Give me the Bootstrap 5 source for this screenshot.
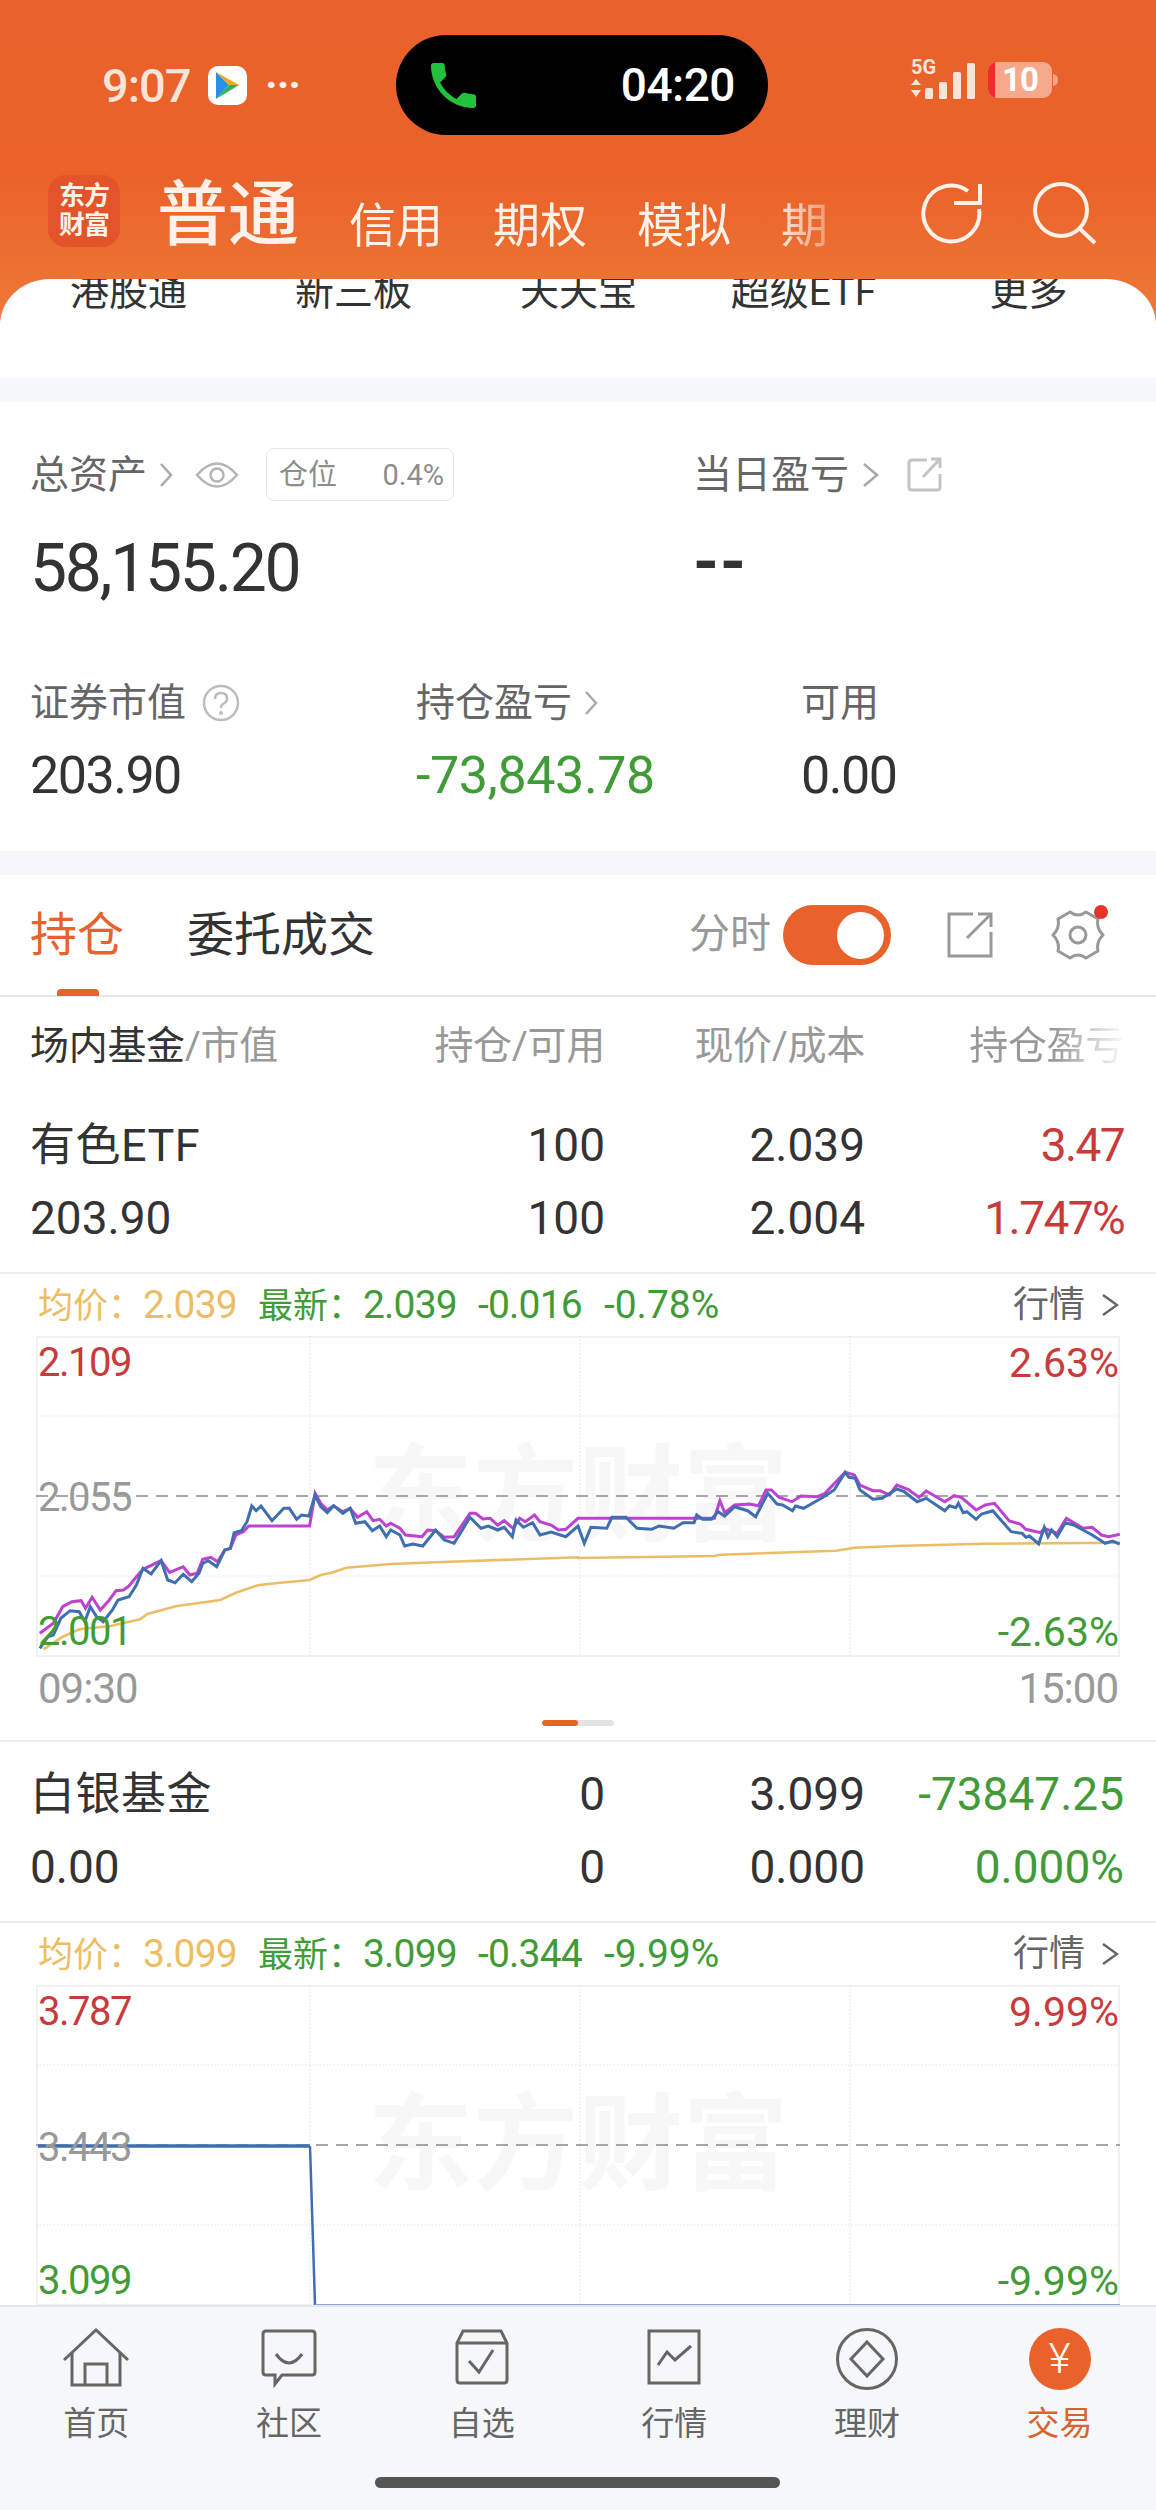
<!DOCTYPE html>
<html lang="zh-CN">
<head>
<meta charset="UTF-8">
<meta name="viewport" content="width=device-width, initial-scale=1.0">
<title>交易</title>
<link href="https://cdn.jsdelivr.net/npm/bootstrap@5.3.3/dist/css/bootstrap.min.css" rel="stylesheet" crossorigin="anonymous">
<style>
body { font-family: Roboto, "Noto Sans CJK SC", sans-serif; background: #f6f7f9; color: #333; }
.phone { width: 1156px; height: 2510px; overflow: hidden; }
.app-head { height: 325px; background: linear-gradient(180deg, #ea622b 0%, #ea622a 55%, #ee7a38 100%); color: #fdf1e9; }
.status-row { padding-top: 35px; height: 135px; }
.status-left { width: 396px; height: 100px; padding-left: 102px; }
.clock { font-size: 47px; font-weight: 500; letter-spacing: -1px; line-height: 1; color: #f9e4d8; width: 106px; }
.app-ico { width: 39px; height: 39px; background: #fff; border-radius: 10px; }
.more-dots { margin-left: 18px; font-size: 42px; font-weight: 700; letter-spacing: -1px; line-height: 1; }
.call-pill { width: 372px; height: 100px; background: #000; border-radius: 50px; padding: 0 33px 0 35px; color: #fff; font-size: 46px; font-weight: 500; letter-spacing: -.5px; }
.status-right { padding-left: 143px; height: 100px; padding-top: 23px; }
.batt-ico { margin-left: 13px; }
.tab-row { padding: 40px 0 0 48px; height: 112px; }
.logo-box { width: 72px; height: 72px; border-radius: 18px; background: #e4542a; font-size: 26px; font-weight: 700; line-height: 29px; text-align: center; padding-top: 7px; letter-spacing: -1px; }
.type-tabs { width: 668px; margin-left: 37px; height: 77px; overflow: hidden; white-space: nowrap; gap: 50px; -webkit-mask-image: linear-gradient(90deg, #000 92%, rgba(0,0,0,.4) 100%); mask-image: linear-gradient(90deg, #000 92%, rgba(0,0,0,.4) 100%); }
.tab-big { font-size: 71px; line-height: 74px; font-weight: 500; }
.tab-small { font-size: 47px; line-height: 52px; }
.head-icons { margin-left: 95px; gap: 49px; padding-top: 7px; }
.quick-strip { height: 99px; margin-top: -46px; background: #fff; border-radius: 50px 50px 0 0 / 46px 46px 0 0; overflow: hidden; }
.quick-inner { display: grid; grid-template-columns: repeat(5, 225px); padding-left: 16px; margin-top: -6px; font-size: 39px; line-height: 38px; color: #333; text-align: center; }
.acct-card { margin-top: 24px; height: 449px; background: #fff; padding: 46px 0 0 30px; }
.lbl { color: #666; font-size: 39px; line-height: 50px; }
.chev { margin-left: 12px; }
.acct-col-a { width: 663px; }
.acct-col-b { width: 386px; }
.acct-col-c { width: 385px; }
.eye-ico { margin-left: 22px; }
.pos-tag { margin-left: 27px; height: 53px; width: 188px; border: 1px solid #e6e6e6; border-radius: 8px; color: #8d8d8d; font-size: 29px; padding: 0 9px 0 12px; }
.ext-ico { margin-left: 28px; }
.total-val { font-size: 66px; line-height: 70px; margin-top: 33px; letter-spacing: -2.3px; }
.dash-val { font-size: 66px; line-height: 70px; margin-top: 27px; font-weight: 700; letter-spacing: 1px; }
.sub-row { margin-top: 74px; }
.val-md { font-size: 52px; line-height: 50px; margin-top: 23px; letter-spacing: -1.5px; }
.val-wide { letter-spacing: -.4px; }
.up-red { color: #c93a3a; }
.down-grn { color: #419c37; }
.hold-wrap { margin-top: 24px; background: #fff; }
.hold-tabs { height: 122px; padding: 0 51px 0 30px; border-bottom: 2px solid #e9e9e9; position: relative; font-size: 47px; }
.tab-on { color: #e8622d; }
.tab-on-bar { position: absolute; left: 57px; bottom: -1px; width: 42px; height: 7px; background: #e8622d; border-radius: 4px 4px 0 0; }
.tab-off { margin-left: 63px; color: #333; }
.fs-label { color: #999; font-size: 41px; margin-right: 12px; }
.switch-pill { width: 108px; height: 60px; background: #ea622b; border-radius: 30px; padding: 0 7px; margin-right: 56px; }
.switch-knob { width: 47px; height: 47px; border-radius: 50%; background: #fff; }
.gear-wrap { position: relative; margin-left: 58px; }
.gear-dot { position: absolute; right: -3px; top: -3px; width: 14px; height: 14px; border-radius: 50%; background: #e8332a; }
.hold-grid { display: grid; grid-template-columns: 330px 245px 260px 259px; padding-left: 30px; }
.hold-head { height: 97px; font-size: 39px; color: #999; letter-spacing: -.3px; }
.hold-head > div { align-self: center; line-height: 50px; }
.name-dark { color: #333; }
.fade-cell { display: inline-block; -webkit-mask-image: linear-gradient(90deg, #000 55%, rgba(0,0,0,.05) 100%); mask-image: linear-gradient(90deg, #000 55%, rgba(0,0,0,.05) 100%); }
.stock-rows { padding: 15px 0 17px; border-bottom: 2px solid #ededed; }
.stock-line { height: 73px; font-size: 46px; line-height: 73px; }
.name-cn { font-size: 45px; letter-spacing: .5px; }
.red-tight { letter-spacing: -1.6px; }
.chart-info { height: 62px; padding: 0 37px 0 38px; font-size: 39px; letter-spacing: -.8px; }
.info-cn { font-size: 35px; letter-spacing: 0; }
.gap-info { margin-left: 21px; }
.pct-wide { margin-left: 22px; letter-spacing: 0; }
.amber { color: #eebd63; }
.quote-link { color: #666; font-size: 36px; letter-spacing: 0; }
.chart-box { position: relative; margin-left: 36px; width: 1084px; height: 321px; border: 2px solid #f1f1f1; }
.chart-box svg { position: absolute; left: -2px; top: -2px; }
.water-mark { position: absolute; inset: 0; font-size: 105px; font-weight: 700; color: #f7f7f7; letter-spacing: 0; }
.chart-lbl { position: absolute; font-size: 40px; line-height: 40px; letter-spacing: -1.5px; }
.lbl-l { left: 0; }
.lbl-r { right: -1px; font-size: 41px; letter-spacing: 0; }
.lbl-gray { color: #999; }
.pos-a { top: 5px; }
.pos-m1 { top: 140px; }
.pos-m2 { top: 141px; }
.pos-b { top: 274px; }
.time-row { height: 60px; padding: 2px 38px 0; color: #999; font-size: 42px; letter-spacing: -1px; }
.pager-bar { width: 72px; height: 6px; margin: 3px auto 14px; background: #e3e3e3; border-radius: 3px; overflow: hidden; }
.pager-on { width: 36px; height: 6px; background: #ea622b; border-radius: 3px; }
.stock-two { border-top: 2px solid #ededed; padding-top: 16px; }
.main-scroll { height: 2305px; overflow: hidden; }
.bottom-nav { height: 205px; background: #f6f7f9; border-top: 2px solid #e6e7ec; padding-top: 21px; position: relative; }
.nav-ico { height: 62px; }
.nav-txt { font-size: 33px; line-height: 40px; margin-top: 14px; color: #666; }
.nav-txt-on { color: #d9622e; }
.yuan-dot { width: 62px; height: 62px; border-radius: 50%; background: #ea622b; color: #fff; font-size: 42px; font-weight: 300; line-height: 1; }
.home-bar { position: absolute; left: 375px; top: 170px; width: 405px; height: 11px; background: #555; border-radius: 6px; }
</style>
</head>
<body>
<div class="phone">
  <div class="main-scroll">
    <div class="app-head">
      <div class="status-row d-flex">
        <div class="status-left d-flex align-items-center">
          <span class="clock">9:07</span>
          <span class="app-ico d-flex align-items-center justify-content-center">
            <svg width="27" height="31" viewBox="0 0 27 31"><polygon points="2,2 15,15 2,29" fill="#2a8fe8"/><polygon points="2,2 25,15 15,15" fill="#f6a623"/><polygon points="2,29 25,15 15,15" fill="#2fb45a"/></svg>
          </span>
          <span class="more-dots">···</span>
        </div>
        <div class="call-pill d-flex align-items-center justify-content-between">
          <svg width="45" height="45" viewBox="3 3 18 18"><path fill="#22c23c" d="M6.62 10.79c1.44 2.83 3.76 5.14 6.59 6.59l2.2-2.2c.27-.27.67-.36 1.02-.24 1.12.37 2.33.57 3.57.57.55 0 1 .45 1 1V20c0 .55-.45 1-1 1-9.39 0-17-7.61-17-17 0-.55.45-1 1-1h3.5c.55 0 1 .45 1 1 0 1.25.2 2.45.57 3.57.11.35.03.74-.25 1.02l-2.2 2.2z"/></svg>
          <span>04:20</span>
        </div>
        <div class="status-right d-flex align-items-start">
          <svg width="64" height="41" viewBox="0 0 64 41">
            <text x="0" y="16" font-family="Roboto" font-size="20" font-weight="700" fill="#f9e4d8">5G</text>
            <polygon points="0,27 5,21 10,27" fill="#f9e4d8"/><polygon points="0,32 5,39 10,32" fill="#f9e4d8"/>
            <rect x="14" y="30" width="8" height="11" rx="1.5" fill="#f9e4d8"/><rect x="28" y="24" width="8" height="17" rx="1.5" fill="#f9e4d8"/><rect x="42" y="14" width="8" height="27" rx="1.5" fill="#f9e4d8"/><rect x="56" y="5" width="8" height="36" rx="1.5" fill="#f9e4d8"/>
          </svg>
          <svg class="batt-ico" width="70" height="41" viewBox="0 0 70 41">
            <rect x="0" y="4" width="64" height="36" rx="9" fill="#f5a98a"/>
            <path d="M9 4 A9 9 0 0 0 0 13 V31 A9 9 0 0 0 9 40 H7 V4Z" fill="#ee2c2c"/>
            <path d="M65 16 q5 1 5 6 q0 5 -5 6Z" fill="#f5a98a"/>
            <text x="14" y="33" font-family="Roboto" font-size="33" font-weight="700" letter-spacing="-1" fill="#fff">10</text>
          </svg>
        </div>
      </div>
      <div class="tab-row d-flex">
        <div class="logo-box flex-shrink-0">东方<br>财富</div>
        <div class="type-tabs d-flex align-items-end">
          <span class="tab-big">普通</span>
          <span class="tab-small">信用</span>
          <span class="tab-small">期权</span>
          <span class="tab-small">模拟</span>
          <span class="tab-small">期</span>
        </div>
        <div class="head-icons d-flex align-items-start flex-shrink-0">
          <svg width="64" height="64" viewBox="0 0 64 64" fill="none" stroke="#fdf1e9" stroke-width="4"><path d="M48 9 A28 28 0 1 0 59 27"/><path d="M60 2 V21 H34"/></svg>
          <svg width="64" height="64" viewBox="0 0 64 64" fill="none" stroke="#fdf1e9" stroke-width="4"><circle cx="28" cy="28" r="26"/><path d="M46 46 L62 61"/></svg>
        </div>
      </div>
    </div>

    <div class="quick-strip">
      <div class="quick-inner">
        <div>港股通</div>
        <div>新三板</div>
        <div>天天宝</div>
        <div>超级ETF</div>
        <div>更多</div>
      </div>
    </div>

    <div class="acct-card">
      <div class="d-flex">
        <div class="acct-col-a d-flex align-items-center lbl">
          总资产
          <svg class="chev" width="14" height="28" viewBox="0 0 14 28" fill="none" stroke="#aaa" stroke-width="2.5"><path d="M2 3 L12 14 L2 25"/></svg>
          <svg class="eye-ico" width="44" height="30" viewBox="0 0 44 30" fill="none" stroke="#b5b5b5" stroke-width="2.5"><path d="M2 15 Q22 -8 42 15 Q22 38 2 15Z"/><circle cx="22" cy="15" r="6.5"/></svg>
          <span class="pos-tag d-flex align-items-center justify-content-between"><span>仓位</span><span>0.4%</span></span>
        </div>
        <div class="d-flex align-items-center lbl">
          当日盈亏
          <svg class="chev" width="18" height="28" viewBox="0 0 18 28" fill="none" stroke="#aaa" stroke-width="2.5"><path d="M3 3 L16 14 L3 25"/></svg>
          <svg class="ext-ico" width="36" height="36" viewBox="0 0 36 36" fill="none" stroke="#c4c4c4" stroke-width="3"><path d="M20 3 H5 Q2 3 2 6 V30 Q2 33 5 33 H30 Q33 33 33 30 V17"/><path d="M16 20 L32 3"/><path d="M24 2 H33 V11"/></svg>
        </div>
      </div>
      <div class="d-flex">
        <div class="acct-col-a total-val">58,155.20</div>
        <div class="dash-val">--</div>
      </div>
      <div class="d-flex sub-row">
        <div class="acct-col-b d-flex align-items-center lbl">
          证券市值
          <svg class="ms-3" width="38" height="38" viewBox="0 0 38 38" fill="none" stroke="#bdbdbd" stroke-width="2.5"><circle cx="19" cy="19" r="17"/><path d="M13 15 Q13 9 19 9 Q25 9 25 14.5 Q25 18 21 20 Q19 21 19 24"/><circle cx="19" cy="29" r=".8"/></svg>
        </div>
        <div class="acct-col-c d-flex align-items-center lbl">
          持仓盈亏
          <svg class="chev" width="14" height="28" viewBox="0 0 14 28" fill="none" stroke="#aaa" stroke-width="2.5"><path d="M2 3 L12 14 L2 25"/></svg>
        </div>
        <div class="lbl">可用</div>
      </div>
      <div class="d-flex">
        <div class="acct-col-b val-md">203.90</div>
        <div class="acct-col-c val-md val-wide down-grn">-73,843.78</div>
        <div class="val-md">0.00</div>
      </div>
    </div>

    <div class="hold-wrap">
      <div class="hold-tabs d-flex align-items-center">
        <span class="tab-on">持仓</span>
        <span class="tab-on-bar"></span>
        <span class="tab-off">委托成交</span>
        <span class="ms-auto fs-label">分时</span>
        <span class="switch-pill d-flex align-items-center justify-content-end"><span class="switch-knob"></span></span>
        <svg width="46" height="46" viewBox="0 0 46 46" fill="none" stroke="#999" stroke-width="3"><path d="M26 2 H2 V44 H44 V20"/><path d="M20 26 L43 3"/><path d="M31 2 H44 V15"/></svg>
        <span class="gear-wrap d-inline-flex">
          <svg width="54" height="54" viewBox="0 0 54 54" fill="none" stroke="#999" stroke-width="3" stroke-linejoin="round"><path d="M19 4 Q27 10 35 4 L47 11 Q45 20 52 27 Q45 34 47 43 L35 50 Q27 44 19 50 L7 43 Q9 34 2 27 Q9 20 7 11 Z"/><circle cx="27" cy="27" r="8"/></svg>
          <span class="gear-dot"></span>
        </span>
      </div>
      <div class="hold-grid hold-head">
        <div><span class="name-dark">场内基金</span>/市值</div>
        <div class="text-end">持仓/可用</div>
        <div class="text-end">现价/成本</div>
        <div class="text-end"><span class="fade-cell">持仓盈亏</span></div>
      </div>
      <div class="stock-rows">
        <div class="hold-grid stock-line">
          <div class="name-cn">有色ETF</div><div class="text-end">100</div><div class="text-end">2.039</div><div class="text-end up-red red-tight">3.47</div>
        </div>
        <div class="hold-grid stock-line">
          <div>203.90</div><div class="text-end">100</div><div class="text-end">2.004</div><div class="text-end up-red red-tight">1.747%</div>
        </div>
      </div>

      <div class="chart-info d-flex align-items-center">
        <span class="amber"><span class="info-cn">均价：</span>2.039</span>
        <span class="down-grn gap-info"><span class="info-cn">最新：</span>2.039</span>
        <span class="down-grn gap-info">-0.016</span>
        <span class="down-grn pct-wide">-0.78%</span>
        <span class="ms-auto quote-link d-flex align-items-center">行情
          <svg class="ms-3" width="18" height="26" viewBox="0 0 18 26" fill="none" stroke="#666" stroke-width="2.5"><path d="M2 3 L16 13 L2 23"/></svg>
        </span>
      </div>
      <div class="chart-box">
        <div class="water-mark d-flex align-items-center justify-content-center">东方财富</div>
        <svg id="chart-etf" width="1084" height="321" viewBox="36 1336 1084 321" fill="none"></svg>
        <span class="chart-lbl lbl-l up-red pos-a">2.109</span>
        <span class="chart-lbl lbl-r up-red pos-a">2.63%</span>
        <span class="chart-lbl lbl-l lbl-gray pos-m1">2.055</span>
        <span class="chart-lbl lbl-l down-grn pos-b">2.001</span>
        <span class="chart-lbl lbl-r down-grn pos-b">-2.63%</span>
      </div>
      <div class="time-row d-flex align-items-center justify-content-between"><span>09:30</span><span>15:00</span></div>
      <div class="pager-bar"><div class="pager-on"></div></div>

      <div class="stock-rows stock-two">
        <div class="hold-grid stock-line">
          <div class="name-cn">白银基金</div><div class="text-end">0</div><div class="text-end">3.099</div><div class="text-end down-grn">-73847.25</div>
        </div>
        <div class="hold-grid stock-line">
          <div>0.00</div><div class="text-end">0</div><div class="text-end">0.000</div><div class="text-end down-grn">0.000%</div>
        </div>
      </div>

      <div class="chart-info d-flex align-items-center">
        <span class="amber"><span class="info-cn">均价：</span>3.099</span>
        <span class="down-grn gap-info"><span class="info-cn">最新：</span>3.099</span>
        <span class="down-grn gap-info">-0.344</span>
        <span class="down-grn pct-wide">-9.99%</span>
        <span class="ms-auto quote-link d-flex align-items-center">行情
          <svg class="ms-3" width="18" height="26" viewBox="0 0 18 26" fill="none" stroke="#666" stroke-width="2.5"><path d="M2 3 L16 13 L2 23"/></svg>
        </span>
      </div>
      <div class="chart-box">
        <div class="water-mark d-flex align-items-center justify-content-center">东方财富</div>
        <svg id="chart-silver" width="1084" height="321" viewBox="36 1984 1084 321" fill="none"></svg>
        <span class="chart-lbl lbl-l up-red pos-a">3.787</span>
        <span class="chart-lbl lbl-r up-red pos-a">9.99%</span>
        <span class="chart-lbl lbl-l lbl-gray pos-m2">3.443</span>
        <span class="chart-lbl lbl-l down-grn pos-b">3.099</span>
        <span class="chart-lbl lbl-r down-grn pos-b">-9.99%</span>
      </div>
    </div>
  </div>

  <div class="bottom-nav">
    <div class="row g-0 text-center">
      <div class="col-2">
        <div class="nav-ico"><svg width="66" height="60" viewBox="0 0 66 60" fill="none" stroke="#666" stroke-width="3"><path d="M1 32 L33 2 L65 32"/><path d="M9 24 V57 H57 V24"/><path d="M22 57 V36 H44 V57"/></svg></div>
        <div class="nav-txt">首页</div>
      </div>
      <div class="col-2">
        <div class="nav-ico"><svg width="56" height="60" viewBox="0 0 56 60" fill="none" stroke="#666" stroke-width="3"><path d="M5 3 H51 Q54 3 54 6 V44 Q54 47 51 47 H21 L14 56 V47 H5 Q2 47 2 44 V6 Q2 3 5 3Z"/><path d="M15 26 Q28 44 41 26"/></svg></div>
        <div class="nav-txt">社区</div>
      </div>
      <div class="col-2">
        <div class="nav-ico"><svg width="54" height="58" viewBox="0 0 54 58" fill="none" stroke="#666" stroke-width="3"><path d="M8 3 H46 L52 15 V52 Q52 55 49 55 H5 Q2 55 2 52 V15 Z"/><path d="M2 15 H52"/><path d="M14 33 L24 44 L38 22"/></svg></div>
        <div class="nav-txt">自选</div>
      </div>
      <div class="col-2">
        <div class="nav-ico"><svg width="54" height="58" viewBox="0 0 54 58" fill="none" stroke="#666" stroke-width="3"><path d="M2 3 H52 V55 H2 Z"/><path d="M11 37 L20 24 L28 32 L44 18"/></svg></div>
        <div class="nav-txt">行情</div>
      </div>
      <div class="col-2">
        <div class="nav-ico"><svg width="62" height="62" viewBox="0 0 62 62" fill="none" stroke="#666" stroke-width="3"><circle cx="31" cy="31" r="29.5"/><path d="M31 14 L47 31 L31 48 L15 31 Z"/></svg></div>
        <div class="nav-txt">理财</div>
      </div>
      <div class="col-2">
        <div class="nav-ico d-flex justify-content-center"><span class="yuan-dot d-flex align-items-center justify-content-center">¥</span></div>
        <div class="nav-txt nav-txt-on">交易</div>
      </div>
    </div>
    <div class="home-bar"></div>
  </div>
</div>

<script src="https://cdn.jsdelivr.net/npm/bootstrap@5.3.3/dist/js/bootstrap.bundle.min.js" crossorigin="anonymous"></script>
<script>
// points read off the reference: left half and right half of the first chart
const X1 = u => u / 2.713, X2 = u => 578 + u / 2.713, Y = v => 1440 + v / 3;
function pts(a, b) {
  const out = [];
  for (let i = 0; i < a.length; i += 2) out.push(X1(a[i]).toFixed(1) + ',' + Y(a[i + 1]).toFixed(1));
  for (let i = 0; i < b.length; i += 2) out.push(X2(b[i]).toFixed(1) + ',' + Y(b[i + 1]).toFixed(1));
  return out.join(' ');
}
const blueL = [108,625,130,590,145,585,165,535,190,512,215,515,230,545,245,500,262,530,280,545,305,510,320,480,350,470,370,435,388,385,410,402,437,362,455,420,475,428,497,403,520,425,540,400,550,370,565,362,588,380,610,330,625,325,635,278,655,272,670,245,683,198,695,212,708,198,738,242,770,205,785,205,805,238,818,225,838,228,855,165,870,200,888,218,905,197,930,220,950,205,965,250,990,245,1010,272,1030,258,1048,290,1060,270,1085,285,1098,318,1120,312,1147,318,1182,270,1205,300,1232,310,1275,232,1305,265,1325,258,1350,270,1368,262,1390,290,1400,240,1420,262,1445,248,1465,285,1495,276,1535,290,1568,258];
const blueR = [0,258,17,310,35,262,78,265,92,232,130,232,160,265,200,268,220,258,260,265,285,248,315,248,322,225,338,238,362,238,380,215,398,228,425,200,460,212,482,230,515,160,540,192,555,195,582,212,590,198,612,205,660,175,695,150,725,97,735,112,752,115,765,150,800,178,825,175,865,147,885,155,920,185,945,175,995,212,1008,197,1025,203,1032,190,1045,218,1055,215,1080,238,1095,222,1125,212,1175,275,1205,280,1215,292,1225,288,1250,312,1265,262,1275,290,1285,270,1300,290,1322,248,1345,255,1395,285,1430,310,1450,303,1470,312];
const magL = [108,580,145,550,170,500,195,485,220,482,232,505,250,472,272,510,295,482,315,452,335,450,350,438,370,410,388,388,437,362,460,397,497,380,515,405,535,400,550,358,572,352,590,365,610,330,625,325,640,285,660,275,675,258,840,258,855,160,870,190,888,210,905,197,930,215,950,205,970,232,995,215,1012,242,1030,238,1048,258,1060,250,1085,265,1100,285,1145,290,1160,270,1182,272,1205,292,1232,290,1275,220,1290,220,1310,237,1330,235,1350,255,1368,242,1392,265,1410,235,1425,245,1450,225,1465,245,1495,255,1515,270,1535,268,1568,235];
const magR = [0,235,370,235,385,182,398,218,425,195,465,192,490,197,510,150,525,150,545,172,580,185,605,168,650,170,670,160,725,97,750,105,765,135,800,152,820,152,845,165,865,135,895,148,925,172,945,153,995,185,1020,167,1040,172,1080,210,1105,195,1130,190,1170,243,1200,252,1215,268,1255,278,1265,265,1300,280,1325,235,1370,265,1395,262,1420,285,1440,290,1470,283];
const ambL = [118,628,170,590,215,568,300,558,380,538,400,522,480,498,598,480,640,458,700,436,760,428,840,420,870,405,900,398,940,383,1060,372,1200,366,1568,352];
const ambR = [0,354,370,348,385,344,700,332,750,323,860,318,1100,311,1470,308];

function grid(top) {
  const h = [80, 240].map(d => `<path d="M36 ${top + d} H1120" stroke="#ececec" stroke-width="1.5" stroke-dasharray="1.5 2"/>`).join('');
  const v = [310, 580, 850].map(x => `<path d="M${x} ${top} V${top + 321}" stroke="#ececec" stroke-width="1.5" stroke-dasharray="1.5 2"/>`).join('');
  return h + v + `<path d="M36 ${top + 160} H1120" stroke="#8a8a8a" stroke-width="1.5" stroke-dasharray="12 8"/>`;
}
document.getElementById('chart-etf').innerHTML = grid(1336)
  + `<polyline points="${pts(ambL, ambR)}" stroke="#ecbd68" stroke-width="2.6"/>`
  + `<polyline points="${pts(magL, magR)}" stroke="#bd42d0" stroke-width="3"/>`
  + `<polyline points="${pts(blueL, blueR)}" stroke="#3f6fb0" stroke-width="3"/>`;
document.getElementById('chart-silver').innerHTML = grid(1984)
  + `<polyline points="38,2145 310,2145" stroke="#3f6fb0" stroke-width="3.5"/>`
  + `<polyline points="310,2145 315,2304" stroke="#3f6fb0" stroke-width="2.5"/>`
  + `<polyline points="315,2304 1120,2304" stroke="#8aa6cf" stroke-width="2"/>`;
</script>
</body>
</html>
